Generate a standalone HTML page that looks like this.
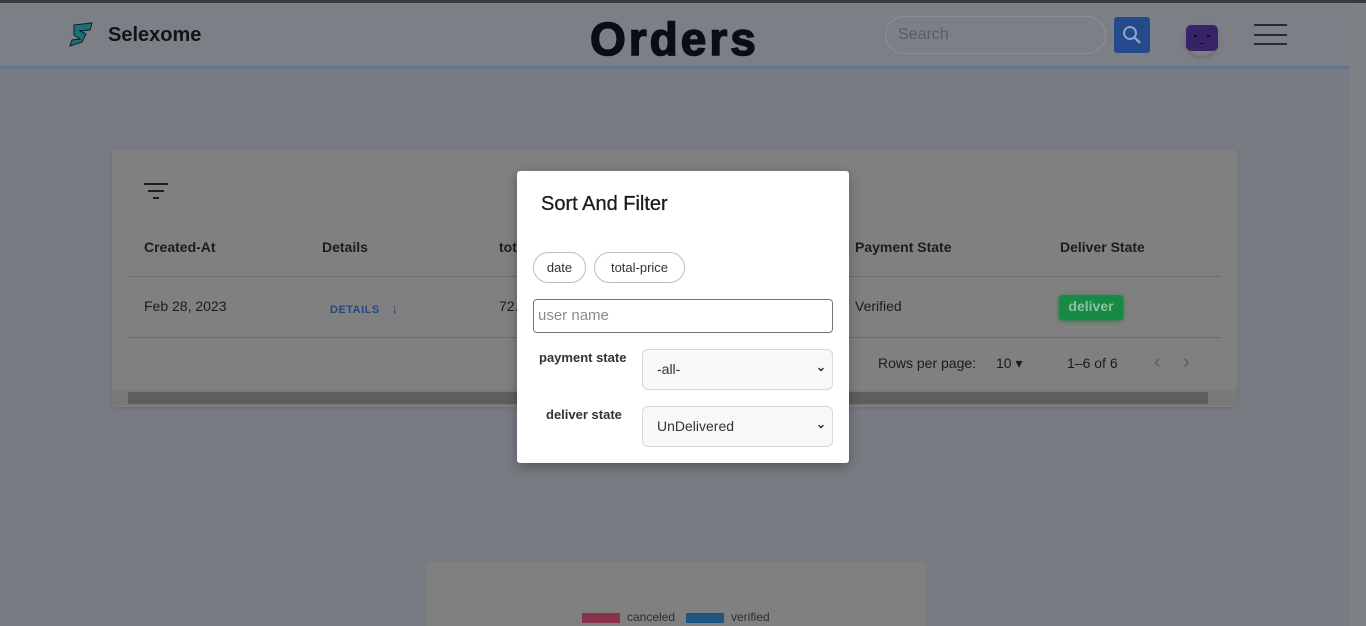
<!DOCTYPE html>
<html><head><meta charset="utf-8"><style>
*{box-sizing:border-box;margin:0;padding:0}
html,body{width:1366px;height:626px;overflow:hidden}
body{background:#787c82;font-family:"Liberation Sans",sans-serif;position:relative}
.abs{position:absolute}
.t{white-space:nowrap}
</style></head><body>
<div class="abs" style="left:0;top:0;width:1366px;height:3px;background:#3a3b3e"></div>
<div class="abs" style="left:0;top:3px;width:1350px;height:63px;background:#7c7f85;box-shadow:0 2px 3px #5a6f8f"></div>
<div class="abs" style="left:1350px;top:3px;width:16px;height:623px;background:#7e8186"></div>
<svg class="abs" style="left:66px;top:22px" width="30" height="26" viewBox="0 0 30 26"><path d="M8 3 L26 1 L24 8 L14 9 L20 12 L16 20 L4 24 L6 18 L14 17 L8 13 Z" fill="#1d6f78" stroke="#0c1e24" stroke-width="1"/></svg>
<div class="abs t" style="left:108px;top:24px;font-size:20px;font-weight:bold;color:#111418">Selexome</div>
<div class="abs t" style="left:590px;top:12px;font-size:46px;font-weight:900;color:#0a0e14;letter-spacing:3px;-webkit-text-stroke:1.5px #0a0e14">Orders</div>
<div class="abs" style="left:885px;top:16px;width:221px;height:38px;border:1px solid #8d9096;border-radius:19px;background:#7c7f85"></div>
<div class="abs t" style="left:898px;top:26px;font-size:16px;color:#5a5d62">Search</div>
<div class="abs" style="left:1114px;top:17px;width:36px;height:36px;background:#234b8c;border-radius:3px"></div>
<svg class="abs" style="left:1120px;top:23px" width="24" height="24" viewBox="0 0 24 24"><circle cx="10" cy="10" r="6" fill="none" stroke="#8da3c7" stroke-width="2"/><path d="M14.5 14.5 L20 20" stroke="#8da3c7" stroke-width="2.5"/></svg>
<div class="abs" style="left:1185px;top:22px;width:34px;height:34px;border-radius:17px;background:#7d8085;box-shadow:0 2px 4px #6a6d72"></div>
<div class="abs" style="left:1186px;top:25px;width:32px;height:26px;background:#362368;border-radius:5px"></div>
<div class="abs" style="left:1194px;top:35px;width:3px;height:2px;background:#111"></div>
<div class="abs" style="left:1207px;top:35px;width:3px;height:2px;background:#111"></div>
<div class="abs" style="left:1199px;top:43px;width:5px;height:1px;background:#111"></div>
<div class="abs" style="left:1254px;top:24px;width:33px;height:2px;background:#262a30"></div>
<div class="abs" style="left:1254px;top:34px;width:33px;height:2px;background:#262a30"></div>
<div class="abs" style="left:1254px;top:43px;width:33px;height:2px;background:#262a30"></div>

<div class="abs" style="left:112px;top:149px;width:1125px;height:258px;background:#808080;border-radius:4px;box-shadow:0 1px 3px #6a6d72"></div>
<div class="abs" style="left:144px;top:183px;width:24px;height:2px;background:#1e1e1e"></div>
<div class="abs" style="left:148px;top:190px;width:16px;height:2px;background:#1e1e1e"></div>
<div class="abs" style="left:153px;top:197px;width:6px;height:2px;background:#1e1e1e"></div>
<div class="abs t" style="left:144px;top:239px;font-size:14px;font-weight:bold;color:#1c1c1c">Created-At</div>
<div class="abs t" style="left:322px;top:239px;font-size:14px;font-weight:bold;color:#1c1c1c">Details</div>
<div class="abs t" style="left:499px;top:239px;font-size:14px;font-weight:bold;color:#1c1c1c">tot</div>
<div class="abs t" style="left:855px;top:239px;font-size:14px;font-weight:bold;color:#1c1c1c">Payment State</div>
<div class="abs t" style="left:1060px;top:239px;font-size:14px;font-weight:bold;color:#1c1c1c">Deliver State</div>
<div class="abs" style="left:128px;top:276px;width:1093px;height:1px;background:#6e6e6e"></div>
<div class="abs t" style="left:144px;top:298px;font-size:14px;color:#1c1c1c">Feb 28, 2023</div>
<div class="abs t" style="left:330px;top:300px;font-size:11px;font-weight:bold;color:#1e4a80;letter-spacing:.5px">DETAILS <span style="font-size:14px;margin-left:8px">↓</span></div>
<div class="abs t" style="left:499px;top:298px;font-size:14px;color:#1c1c1c">72.</div>
<div class="abs t" style="left:855px;top:298px;font-size:14px;color:#1c1c1c">Verified</div>
<div class="abs t" style="left:1059px;top:295px;width:64px;height:25px;background:#178a45;border-radius:3px;box-shadow:0 1px 4px #1a7a40;color:#8cc2a0;font-size:14px;font-weight:bold;text-align:center;line-height:23px">deliver</div>
<div class="abs" style="left:128px;top:337px;width:1093px;height:1px;background:#6e6e6e"></div>
<div class="abs t" style="left:878px;top:355px;font-size:14px;color:#1c1c1c">Rows per page:</div>
<div class="abs t" style="left:996px;top:355px;font-size:14px;color:#1c1c1c">10 ▾</div>
<div class="abs t" style="left:1067px;top:355px;font-size:14px;color:#1c1c1c">1–6 of 6</div>
<div class="abs t" style="left:1154px;top:351px;font-size:20px;color:#5e5e5e">‹ &nbsp; &nbsp;›</div>
<div class="abs" style="left:112px;top:390px;width:1125px;height:16px;background:#7a7a7a"></div>
<div class="abs" style="left:128px;top:392px;width:1080px;height:12px;background:#5e5e5e"></div>

<div class="abs" style="left:426px;top:562px;width:499px;height:70px;background:#808080;border-radius:6px"></div>
<div class="abs" style="left:582px;top:613px;width:38px;height:10px;background:#88334a"></div>
<div class="abs t" style="left:627px;top:610px;font-size:12px;color:#2e2e2e">canceled</div>
<div class="abs" style="left:686px;top:613px;width:38px;height:10px;background:#1c567e"></div>
<div class="abs t" style="left:731px;top:610px;font-size:12px;color:#2e2e2e">verified</div>

<div class="abs" style="left:517px;top:171px;width:332px;height:292px;background:#fff;border-radius:3px;box-shadow:0 4px 12px rgba(0,0,0,.3)"></div>
<div class="abs t" style="left:541px;top:193px;font-size:20px;color:#1c1c1c;-webkit-text-stroke:.3px #1c1c1c">Sort And Filter</div>
<div class="abs t" style="left:533px;top:252px;width:53px;height:31px;border:1px solid #bdbdbd;border-radius:16px;font-size:13px;color:#333;text-align:center;line-height:29px">date</div>
<div class="abs t" style="left:594px;top:252px;width:91px;height:31px;border:1px solid #bdbdbd;border-radius:16px;font-size:13px;color:#333;text-align:center;line-height:29px">total-price</div>
<div class="abs" style="left:533px;top:299px;width:300px;height:34px;border:1px solid #767676;border-radius:4px"></div>
<div class="abs t" style="left:538px;top:307px;font-size:15px;color:#8a8a8a">user name</div>
<div class="abs t" style="left:539px;top:350px;font-size:13px;font-weight:bold;color:#333">payment state</div>
<div class="abs" style="left:642px;top:349px;width:191px;height:41px;border:1px solid #d6d8dc;border-radius:6px;background:#f7f8fa"></div>
<div class="abs t" style="left:657px;top:361px;font-size:14px;color:#333">-all-</div>
<div class="abs t" style="left:816px;top:360px;font-size:12px;color:#333;font-weight:bold">⌄</div>
<div class="abs t" style="left:546px;top:407px;font-size:13px;font-weight:bold;color:#333">deliver state</div>
<div class="abs" style="left:642px;top:406px;width:191px;height:41px;border:1px solid #d6d8dc;border-radius:6px;background:#f7f8fa"></div>
<div class="abs t" style="left:657px;top:418px;font-size:14px;color:#333">UnDelivered</div>
<div class="abs t" style="left:816px;top:417px;font-size:12px;color:#333;font-weight:bold">⌄</div>
</body></html>
